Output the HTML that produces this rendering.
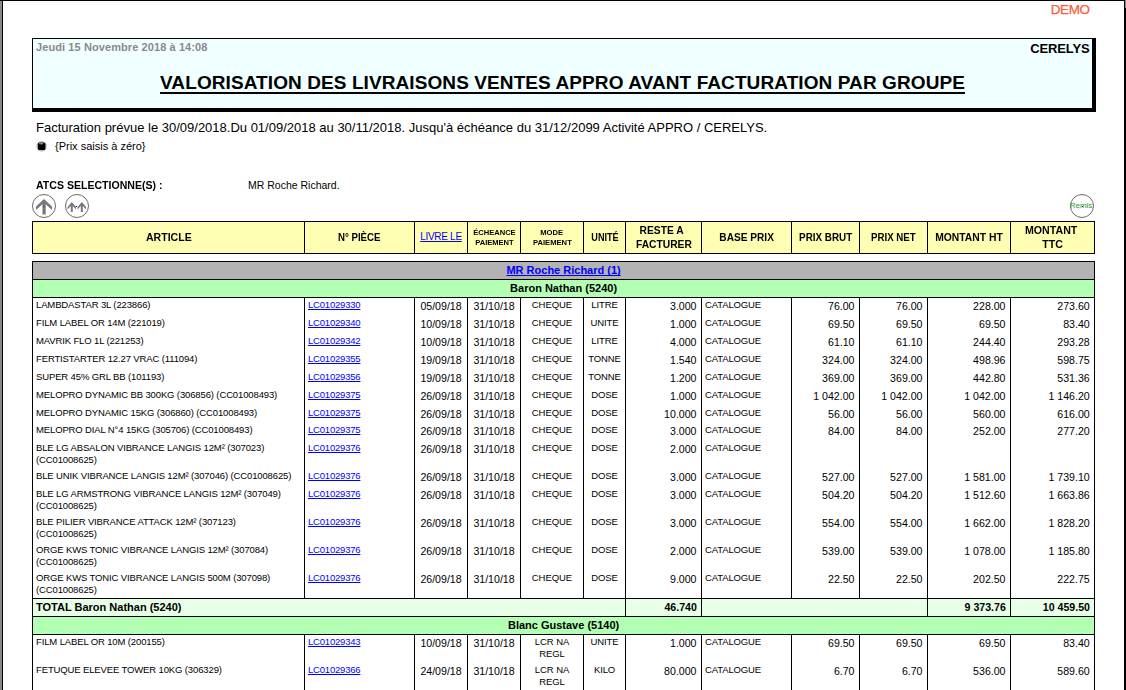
<!DOCTYPE html>
<html lang="fr"><head><meta charset="utf-8"><title>Valorisation des livraisons</title>
<style>
html,body{margin:0;padding:0;background:#fff;}
body{width:1126px;height:690px;position:relative;overflow:hidden;font-family:"Liberation Sans",Arial,sans-serif;color:#000;}
.abs{position:absolute;white-space:nowrap;}
#fl{left:0;top:0;width:2px;height:690px;background:#888;border-right:1px solid #000;}
#ft{left:0;top:0;width:1126px;height:1px;background:#000;}
#fr{left:1124px;top:0;width:2px;height:690px;background:#000;}
#demo{right:36.4px;top:1px;font-size:13.5px;line-height:17px;color:#ff5a3c;letter-spacing:-.4px;-webkit-text-stroke:.25px #ff5a3c;}
#box{left:32px;top:38px;width:1059px;height:69px;background:#f0ffff;border-style:solid;border-color:#000;border-width:1px 4px 4px 1px;}
#date{left:36px;top:41px;font-size:11px;line-height:13px;font-weight:bold;color:#8a8a8a;letter-spacing:.09px;}
#soc{right:36.4px;top:41px;font-size:13px;line-height:15px;font-weight:bold;letter-spacing:-.12px;}
#title{left:32px;width:1061px;top:72px;text-align:center;font-size:19px;line-height:22px;font-weight:bold;text-decoration:underline;text-decoration-thickness:2px;text-underline-offset:2.5px;letter-spacing:.09px;}
#fact{left:36px;top:120px;font-size:13px;line-height:15px;}
#prix{left:55px;top:140px;font-size:11px;line-height:13px;}
#bul{left:35px;top:140px;}
#atcs{left:36px;top:179px;font-size:11px;line-height:13px;font-weight:bold;transform:scaleX(.96);transform-origin:0 0;}
#mr{left:248px;top:179px;font-size:10.5px;line-height:12px;}
table{border-collapse:collapse;table-layout:fixed;position:absolute;left:32px;width:1063px;}
#hd{top:221px;}
#hd td{border:1px solid #000;background:#ffffb3;text-align:center;vertical-align:middle;font-weight:bold;font-size:11px;line-height:13px;padding:0;height:31px;}
#hd td.sm{font-size:8px;line-height:10px;}
#hd td.two{line-height:14px;padding-bottom:2px;height:29px;}
.x{display:inline-block;}
#hd a{color:#00f;font-weight:normal;font-size:10px;letter-spacing:-.3px;position:relative;top:-1px;text-underline-offset:1px;}
#mt{top:261px;}
#mt td{padding:2px 3px 0 3px;vertical-align:top;border-left:1px solid #000;border-right:1px solid #000;overflow:hidden;}
#mt td.s{font-size:9.5px;line-height:12px;letter-spacing:-.13px;padding-top:1px;}
td.n{font-size:10.6px;line-height:13px;}
td.c{text-align:center;}
#mt td.r{text-align:right;padding-right:4.5px;}
#mt td.m{letter-spacing:-.05px;}
#mt td.s a{letter-spacing:-.2px;}
a{color:#00f;text-decoration-skip-ink:none;}
#mt tr.g td{background:#b3b3b3;border:1px solid #000;text-align:center;font-weight:bold;font-size:11px;line-height:13px;height:17px;padding:0;vertical-align:middle;}
#mt tr.v td{background:#b3ffb3;border:1px solid #000;text-align:center;font-weight:bold;font-size:11px;line-height:13px;height:17px;padding:0;vertical-align:middle;}
#mt tr.t td{background:#e6ffe6;border:1px solid #000;font-weight:bold;font-size:11px;line-height:13px;height:17px;padding:0 3px;vertical-align:middle;}
#mt tr.t td.r{font-size:10.6px;padding-right:4.2px;}
</style></head><body>
<div class="abs" id="fl"></div><div class="abs" id="ft"></div><div class="abs" id="fr"></div><div class="abs" style="left:1125px;top:0;width:1px;height:8px;background:#888"></div>
<div class="abs" id="demo">DEMO</div>
<div class="abs" id="box"></div>
<div class="abs" id="date">Jeudi 15 Novembre 2018 à 14:08</div>
<div class="abs" id="soc">CERELYS</div>
<div class="abs" id="title">VALORISATION DES LIVRAISONS VENTES APPRO AVANT FACTURATION PAR GROUPE</div>
<div class="abs" id="fact">Facturation prévue le 30/09/2018.Du 01/09/2018 au 30/11/2018. Jusqu'à échéance du 31/12/2099 Activité APPRO / CERELYS.</div>
<svg class="abs" id="bul" width="14" height="14" viewBox="0 0 14 14"><defs><filter id="bf" x="-30%" y="-30%" width="160%" height="160%"><feGaussianBlur stdDeviation=".45"/></filter></defs><circle cx="6.6" cy="6.3" r="5.4" fill="#c2c2c2" filter="url(#bf)"/><rect x="2.9" y="2.6" width="7.5" height="7.5" rx="1.6" fill="#050200" filter="url(#bf)"/><rect x="3.4" y="3" width="6.5" height="6.8" rx="1.2" fill="#000"/><ellipse cx="6.2" cy="3.5" rx="2.4" ry="1.1" fill="#808080" filter="url(#bf)"/></svg>
<div class="abs" id="prix">{Prix saisis à zéro}</div>
<div class="abs" id="atcs">ATCS SELECTIONNE(S) :</div>
<div class="abs" id="mr">MR Roche Richard.</div>
<svg class="abs" style="left:30px;top:192px" width="62" height="28" viewBox="0 0 62 28">
<circle cx="14" cy="14" r="11.5" fill="#fff" stroke="#6a6a6a" stroke-width="1"/>
<path d="M14 7 L22 14.5 L22 18 L15.7 12.3 L15.7 22.5 L12.5 22.5 L12.5 12.3 L6 18 L6 14.5 Z" fill="#777"/>
<rect x="13" y="14" width="1" height="1" fill="#00f"/>
<circle cx="47" cy="14" r="11.5" fill="#fff" stroke="#6a6a6a" stroke-width="1"/>
<path d="M41.8 10 L46 15 L46 17.5 L42.8 14 L42.8 20 L40.8 20 L40.8 14 L37.6 17.5 L37.6 15 Z" fill="#777"/>
<path d="M51.8 10 L56 15 L56 17.5 L52.8 14 L52.8 20 L50.8 20 L50.8 14 L47.6 17.5 L47.6 15 Z" fill="#777"/>
<rect x="46" y="14" width="1" height="1" fill="#00f"/>
</svg>
<svg class="abs" style="left:1068px;top:192px" width="28" height="28" viewBox="0 0 28 28">
<circle cx="14" cy="14" r="11.5" fill="#fff" stroke="#6a6a6a" stroke-width="1"/>
<rect x="14" y="14" width="1" height="1" fill="#00f"/>
<text x="13" y="15.6" text-anchor="middle" font-family="Liberation Sans, Arial, sans-serif" font-size="8" fill="#2a9a2a">Remis</text>
</svg>
<table id="hd"><colgroup><col style="width:272px"><col style="width:110px"><col style="width:53px"><col style="width:53px"><col style="width:63px"><col style="width:42px"><col style="width:76px"><col style="width:90px"><col style="width:68px"><col style="width:68px"><col style="width:83px"><col style="width:84px"></colgroup>
<tr><td><span class="x" style="transform:scaleX(0.958)">ARTICLE</span></td><td><span class="x" style="transform:scaleX(0.878)">N° PIÈCE</span></td><td><a href="#">LIVRE LE</a></td><td class="sm"><span class="x" style="transform:scaleX(0.945)">ÉCHEANCE<br>PAIEMENT</span></td><td class="sm"><span class="x" style="transform:scaleX(0.953)"><span style="padding-right:1.5px">MODE</span><br>PAIEMENT</span></td><td style="font-size:10px"><span class="x" style="transform:scaleX(0.91)">UNITÉ</span></td><td class="two"><span class="x" style="transform:scaleX(0.933)"><span style="padding-right:5px">RESTE A</span><br>FACTURER</span></td><td><span class="x" style="transform:scaleX(0.92)">BASE PRIX</span></td><td><span class="x" style="transform:scaleX(0.895)">PRIX BRUT</span></td><td><span class="x" style="transform:scaleX(0.88)">PRIX NET</span></td><td><span class="x" style="transform:scaleX(0.94)">MONTANT HT</span></td><td class="two"><span class="x" style="transform:scaleX(0.965)"><span style="padding-right:3px">MONTANT</span><br>TTC</span></td></tr>
</table>
<table id="mt"><colgroup><col style="width:272px"><col style="width:110px"><col style="width:53px"><col style="width:53px"><col style="width:63px"><col style="width:42px"><col style="width:76px"><col style="width:90px"><col style="width:68px"><col style="width:68px"><col style="width:83px"><col style="width:84px"></colgroup>
<tr class="g"><td colspan="12"><a href="#">MR Roche Richard (1)</a></td></tr>
<tr class="v"><td colspan="12">Baron Nathan (5240)</td></tr>
<tr class="d" style="height:18px"><td class="s">LAMBDASTAR 3L (223866)</td><td class="s"><a href="#">LC01029330</a></td><td class="n c">05/09/18</td><td class="n c">31/10/18</td><td class="s c m">CHEQUE</td><td class="s c">LITRE</td><td class="n r">3.000</td><td class="s">CATALOGUE</td><td class="n r">76.00</td><td class="n r">76.00</td><td class="n r">228.00</td><td class="n r">273.60</td></tr>
<tr class="d" style="height:18px"><td class="s">FILM LABEL OR 14M (221019)</td><td class="s"><a href="#">LC01029340</a></td><td class="n c">10/09/18</td><td class="n c">31/10/18</td><td class="s c m">CHEQUE</td><td class="s c">UNITE</td><td class="n r">1.000</td><td class="s">CATALOGUE</td><td class="n r">69.50</td><td class="n r">69.50</td><td class="n r">69.50</td><td class="n r">83.40</td></tr>
<tr class="d" style="height:18px"><td class="s">MAVRIK FLO 1L (221253)</td><td class="s"><a href="#">LC01029342</a></td><td class="n c">10/09/18</td><td class="n c">31/10/18</td><td class="s c m">CHEQUE</td><td class="s c">LITRE</td><td class="n r">4.000</td><td class="s">CATALOGUE</td><td class="n r">61.10</td><td class="n r">61.10</td><td class="n r">244.40</td><td class="n r">293.28</td></tr>
<tr class="d" style="height:18px"><td class="s">FERTISTARTER 12.27 VRAC (111094)</td><td class="s"><a href="#">LC01029355</a></td><td class="n c">19/09/18</td><td class="n c">31/10/18</td><td class="s c m">CHEQUE</td><td class="s c">TONNE</td><td class="n r">1.540</td><td class="s">CATALOGUE</td><td class="n r">324.00</td><td class="n r">324.00</td><td class="n r">498.96</td><td class="n r">598.75</td></tr>
<tr class="d" style="height:18px"><td class="s">SUPER 45% GRL BB (101193)</td><td class="s"><a href="#">LC01029356</a></td><td class="n c">19/09/18</td><td class="n c">31/10/18</td><td class="s c m">CHEQUE</td><td class="s c">TONNE</td><td class="n r">1.200</td><td class="s">CATALOGUE</td><td class="n r">369.00</td><td class="n r">369.00</td><td class="n r">442.80</td><td class="n r">531.36</td></tr>
<tr class="d" style="height:18px"><td class="s">MELOPRO DYNAMIC BB 300KG (306856) (CC01008493)</td><td class="s"><a href="#">LC01029375</a></td><td class="n c">26/09/18</td><td class="n c">31/10/18</td><td class="s c m">CHEQUE</td><td class="s c">DOSE</td><td class="n r">1.000</td><td class="s">CATALOGUE</td><td class="n r">1 042.00</td><td class="n r">1 042.00</td><td class="n r">1 042.00</td><td class="n r">1 146.20</td></tr>
<tr class="d" style="height:17px"><td class="s">MELOPRO DYNAMIC 15KG (306860) (CC01008493)</td><td class="s"><a href="#">LC01029375</a></td><td class="n c">26/09/18</td><td class="n c">31/10/18</td><td class="s c m">CHEQUE</td><td class="s c">DOSE</td><td class="n r">10.000</td><td class="s">CATALOGUE</td><td class="n r">56.00</td><td class="n r">56.00</td><td class="n r">560.00</td><td class="n r">616.00</td></tr>
<tr class="d" style="height:18px"><td class="s">MELOPRO DIAL N°4 15KG (305706) (CC01008493)</td><td class="s"><a href="#">LC01029375</a></td><td class="n c">26/09/18</td><td class="n c">31/10/18</td><td class="s c m">CHEQUE</td><td class="s c">DOSE</td><td class="n r">3.000</td><td class="s">CATALOGUE</td><td class="n r">84.00</td><td class="n r">84.00</td><td class="n r">252.00</td><td class="n r">277.20</td></tr>
<tr class="d" style="height:28px"><td class="s">BLE LG ABSALON VIBRANCE LANGIS 12M² (307023)<br>(CC01008625)</td><td class="s"><a href="#">LC01029376</a></td><td class="n c">26/09/18</td><td class="n c">31/10/18</td><td class="s c m">CHEQUE</td><td class="s c">DOSE</td><td class="n r">2.000</td><td class="s">CATALOGUE</td><td class="n r"></td><td class="n r"></td><td class="n r"></td><td class="n r"></td></tr>
<tr class="d" style="height:18px"><td class="s">BLE UNIK VIBRANCE LANGIS 12M² (307046) (CC01008625)</td><td class="s"><a href="#">LC01029376</a></td><td class="n c">26/09/18</td><td class="n c">31/10/18</td><td class="s c m">CHEQUE</td><td class="s c">DOSE</td><td class="n r">3.000</td><td class="s">CATALOGUE</td><td class="n r">527.00</td><td class="n r">527.00</td><td class="n r">1 581.00</td><td class="n r">1 739.10</td></tr>
<tr class="d" style="height:28px"><td class="s">BLE LG ARMSTRONG VIBRANCE LANGIS 12M² (307049)<br>(CC01008625)</td><td class="s"><a href="#">LC01029376</a></td><td class="n c">26/09/18</td><td class="n c">31/10/18</td><td class="s c m">CHEQUE</td><td class="s c">DOSE</td><td class="n r">3.000</td><td class="s">CATALOGUE</td><td class="n r">504.20</td><td class="n r">504.20</td><td class="n r">1 512.60</td><td class="n r">1 663.86</td></tr>
<tr class="d" style="height:28px"><td class="s">BLE PILIER VIBRANCE ATTACK 12M² (307123)<br>(CC01008625)</td><td class="s"><a href="#">LC01029376</a></td><td class="n c">26/09/18</td><td class="n c">31/10/18</td><td class="s c m">CHEQUE</td><td class="s c">DOSE</td><td class="n r">3.000</td><td class="s">CATALOGUE</td><td class="n r">554.00</td><td class="n r">554.00</td><td class="n r">1 662.00</td><td class="n r">1 828.20</td></tr>
<tr class="d" style="height:28px"><td class="s">ORGE KWS TONIC VIBRANCE LANGIS 12M² (307084)<br>(CC01008625)</td><td class="s"><a href="#">LC01029376</a></td><td class="n c">26/09/18</td><td class="n c">31/10/18</td><td class="s c m">CHEQUE</td><td class="s c">DOSE</td><td class="n r">2.000</td><td class="s">CATALOGUE</td><td class="n r">539.00</td><td class="n r">539.00</td><td class="n r">1 078.00</td><td class="n r">1 185.80</td></tr>
<tr class="d" style="height:28px"><td class="s">ORGE KWS TONIC VIBRANCE LANGIS 500M (307098)<br>(CC01008625)</td><td class="s"><a href="#">LC01029376</a></td><td class="n c">26/09/18</td><td class="n c">31/10/18</td><td class="s c m">CHEQUE</td><td class="s c">DOSE</td><td class="n r">9.000</td><td class="s">CATALOGUE</td><td class="n r">22.50</td><td class="n r">22.50</td><td class="n r">202.50</td><td class="n r">222.75</td></tr>
<tr class="t"><td colspan="6">TOTAL Baron Nathan (5240)</td><td class="r">46.740</td><td colspan="3"></td><td class="r">9 373.76</td><td class="r">10 459.50</td></tr>
<tr class="v"><td colspan="12">Blanc Gustave (5140)</td></tr>
<tr class="d" style="height:28px"><td class="s">FILM LABEL OR 10M (200155)</td><td class="s"><a href="#">LC01029343</a></td><td class="n c">10/09/18</td><td class="n c">31/10/18</td><td class="s c m">LCR NA<br>REGL</td><td class="s c">UNITE</td><td class="n r">1.000</td><td class="s">CATALOGUE</td><td class="n r">69.50</td><td class="n r">69.50</td><td class="n r">69.50</td><td class="n r">83.40</td></tr>
<tr class="d" style="height:28px"><td class="s">FETUQUE ELEVEE TOWER 10KG (306329)</td><td class="s"><a href="#">LC01029366</a></td><td class="n c">24/09/18</td><td class="n c">31/10/18</td><td class="s c m">LCR NA<br>REGL</td><td class="s c">KILO</td><td class="n r">80.000</td><td class="s">CATALOGUE</td><td class="n r">6.70</td><td class="n r">6.70</td><td class="n r">536.00</td><td class="n r">589.60</td></tr>
</table>
</body></html>
